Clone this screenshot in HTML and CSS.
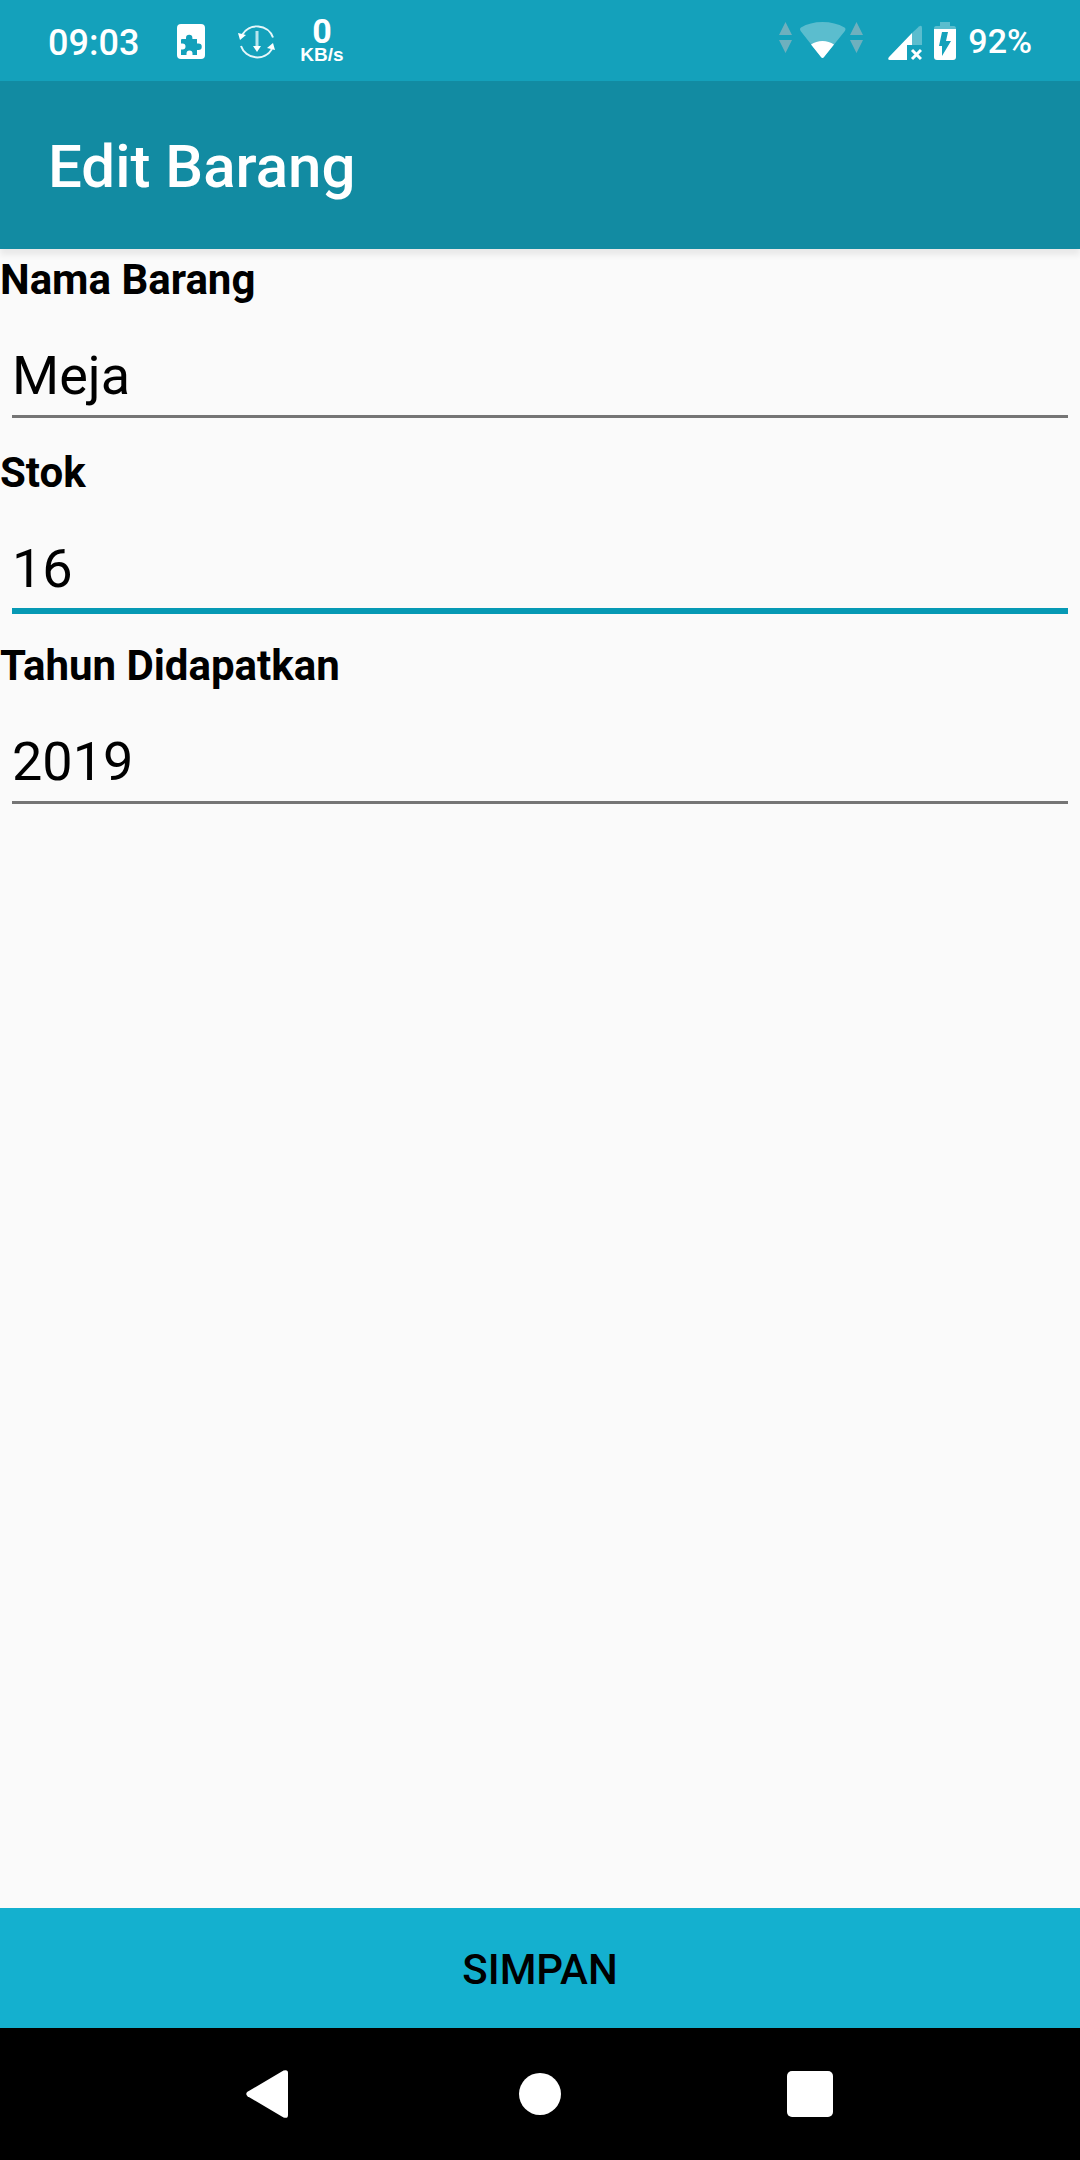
FILE: index.html
```html
<!DOCTYPE html>
<html lang="id">
<head>
<meta charset="utf-8">
<meta name="viewport" content="width=device-width, initial-scale=1">
<title>Edit Barang</title>
<link rel="stylesheet" href="styles.css">
</head>
<body>
<div class="status-bar">
  <div class="status-group status-start">
    <span class="clock">09:03</span>
    <svg class="icon-plugin" width="28" height="40" viewBox="0 0 28 40" aria-hidden="true">
      <rect x="0" y="3" width="28" height="35" rx="4" fill="#fff"/>
      <path fill="#14a1bb" d="M5 18H9V17A3.200 3.200 0 0 1 15.400 17V18H20V22.500H21.500A3.200 3.200 0 0 1 21.500 29H20V34H15.500V32.500A3 3 0 0 0 9.500 32.500V34H4V28.500H5.500A3 3 0 0 0 5.500 22.500H4V19Q4 18 5 18Z"/>
    </svg>
    <svg class="icon-sync" width="38" height="40" viewBox="0 0 38 40" aria-hidden="true">
      <g fill="none" stroke="#e6f7fa" stroke-width="2">
        <path d="M4 14A17 16.500 0 0 1 35 16.500"/>
        <path d="M3 25A17 16.500 0 0 0 34 28"/>
        <path d="M19 10V27" stroke-width="3" stroke="#b9e5ee"/>
      </g>
      <path fill="#fff" d="M0 12L2 19L8 14ZM37 29L35 22L29 27ZM15 25H23L19 31Z"/>
    </svg>
    <span class="speed"><span class="speed-value">0</span><span class="speed-unit">KB/s</span></span>
  </div>
  <div class="status-group status-end">
    <svg class="icon-wifi" width="84" height="40" viewBox="0 0 84 40" aria-hidden="true">
      <path fill="#6eb0be" d="M6.500 1L13 14H0ZM0 19H13L6.500 32ZM77.500 1L84 14H71ZM71 19H84L77.500 32Z"/>
      <path fill="#5bbdce" d="M22 10.500Q20 8 22 6.500Q31 1 43.500 1Q56 1 65.500 6.500Q67.500 8 65.500 10.500L45 36Q43.500 38 42 36Z"/>
      <path fill="#fff" d="M32 23.500Q37 20 43.500 20Q50 20 55 23.500L45 36Q43.500 38 42 36Z"/>
    </svg>
    <svg class="icon-signal" width="34" height="40" viewBox="0 0 34 40" aria-hidden="true">
      <path fill="#5bbdce" d="M24 12L31 5.500Q34 3.500 34 7V24H24Z"/>
      <path fill="#fff" d="M24 12V24H19V39H2Q-1 39 1 36Z"/>
      <path fill="none" stroke="#fff" stroke-width="3" d="M24 29L33 38M33 29L24 38"/>
    </svg>
    <svg class="icon-battery" width="22" height="40" viewBox="0 0 22 40" aria-hidden="true">
      <path fill="#5bbdce" d="M6 1H16V5H20Q22 5 22 8H0Q0 5 2 5H6Z"/>
      <path fill="#fff" d="M0 8H22V36Q22 39 19 39H3Q0 39 0 36Z"/>
      <path fill="#14a1bb" d="M8 11H14L12 20H17L8 35V25H5Z"/>
    </svg>
    <span class="battery-level">92%</span>
  </div>
</div>

<header class="app-bar">
  <h1 class="app-title">Edit Barang</h1>
</header>

<form class="item-form">
  <div class="fields">
    <label class="field-label" for="nama">Nama Barang</label>
    <input class="field-input" id="nama" type="text" value="Meja">
    <label class="field-label" for="stok">Stok</label>
    <input class="field-input is-active" id="stok" type="text" inputmode="numeric" value="16">
    <label class="field-label" for="tahun">Tahun Didapatkan</label>
    <input class="field-input" id="tahun" type="text" inputmode="numeric" value="2019">
  </div>
  <button class="save-button" type="submit">SIMPAN</button>
</form>

<nav class="nav-bar">
  <button class="nav-button" type="button" aria-label="Kembali">
    <svg width="48" height="48" viewBox="0 0 48 48"><path fill="#fff" d="M1.500 21.800L37.500 .600Q42 -1 42 3V45Q42 49 37.500 47.400L1.500 26.200Q-1 24 1.500 21.800Z"/></svg>
  </button>
  <button class="nav-button" type="button" aria-label="Beranda">
    <svg width="48" height="48" viewBox="0 0 48 48"><circle cx="24" cy="24" r="21" fill="#fff"/></svg>
  </button>
  <button class="nav-button" type="button" aria-label="Aplikasi terbaru">
    <svg width="48" height="48" viewBox="0 0 48 48"><rect x="1" y="1" width="46" height="46" rx="5" fill="#fff"/></svg>
  </button>
</nav>
</body>
</html>
```

FILE: styles.css
```css
* {
  box-sizing: border-box;
}

body {
  margin: 0;
  min-height: 100vh;
  display: flex;
  flex-direction: column;
  background: #fafafa;
  color: #000;
  font-family: Roboto, "Liberation Sans", sans-serif;
}

svg {
  display: block;
  flex: none;
}

button {
  border: 0;
  padding: 0;
  font: inherit;
  color: inherit;
}

/* Status bar */
.status-bar {
  display: flex;
  justify-content: space-between;
  height: 81px;
  padding: 0 48px;
  background: #14a1bb;
  color: #fff;
  font-weight: 500;
}

.status-group {
  display: flex;
  align-items: center;
}

.status-end {
  gap: 12px;
}

.clock {
  font-size: 36px;
  line-height: 40px;
  padding-top: 4px;
}

.icon-plugin {
  margin-left: 38px;
}

.icon-sync {
  margin: 0 24px 0 33px;
}

.icon-signal {
  margin-left: 13px;
}

.speed {
  display: flex;
  flex-direction: column;
  align-items: center;
}

.speed-value {
  font-size: 34px;
  line-height: 24px;
  font-weight: 700;
}

.speed-unit {
  font-family: "Liberation Sans", Arial, sans-serif;
  font-size: 19px;
  font-weight: 700;
  line-height: 16px;
  padding-top: 4px;
}

.battery-level {
  font-size: 34px;
  line-height: 40px;
}

/* Title bar */
.app-bar {
  display: flex;
  align-items: center;
  min-height: 168px;
  padding: 4px 48px 0;
  background: #128ba2;
  color: #fff;
  box-shadow: 0 6px 6px rgba(0, 0, 0, 0.07);
}

.app-title {
  margin: 0;
  font-size: 60px;
  line-height: 72px;
  font-weight: 500;
}

/* Form */
.item-form {
  flex: 1;
  display: flex;
  flex-direction: column;
}

.fields {
  flex: 1;
  display: flex;
  flex-direction: column;
}

.field-label {
  font-size: 42px;
  line-height: 62px;
  font-weight: 700;
}

.field-input {
  height: 107px;
  margin: 0 12px 24px;
  padding: 32px 0 8px;
  border: 0;
  border-bottom: 3px solid #757575;
  border-radius: 0;
  outline: 0;
  background: transparent;
  color: #000;
  font-family: inherit;
  font-size: 54px;
  line-height: 64px;
}

.field-input.is-active {
  height: 110px;
  margin-bottom: 21px;
  border-bottom: 6px solid #0699b4;
}

.save-button {
  min-height: 120px;
  padding-top: 4px;
  background: #14b0cf;
  font-size: 42px;
  line-height: 48px;
  font-weight: 500;
}

/* Navigation bar */
.nav-bar {
  display: flex;
  justify-content: center;
  height: 132px;
  background: #000;
}

.nav-button {
  display: flex;
  align-items: center;
  justify-content: center;
  flex: 0 0 25%;
  background: transparent;
}
```
